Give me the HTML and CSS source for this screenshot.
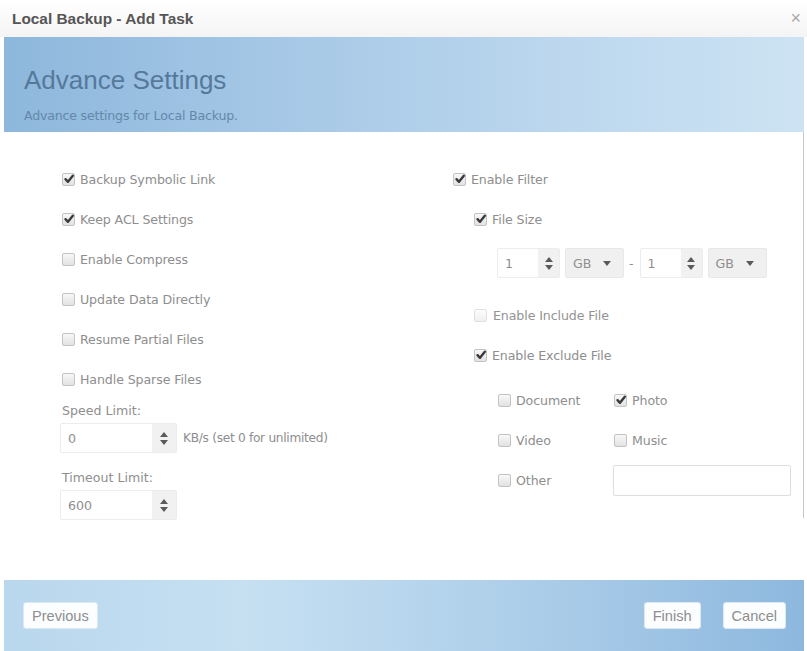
FILE: index.html
```html
<!DOCTYPE html>
<html>
<head>
<meta charset="utf-8">
<title>Local Backup - Add Task</title>
<link rel="stylesheet" href="styles.css">
</head>
<body>
<div class="dialog">
  <div class="titlebar">
    <span class="title">Local Backup - Add Task</span>
    <span class="close">×</span>
  </div>
  <div class="banner">
    <div class="banner-title">Advance Settings</div>
    <div class="banner-sub">Advance settings for Local Backup.</div>
  </div>
  <div class="content">
    <div class="col-left">
      <label class="row"><span class="cb checked"><svg viewBox="0 0 12 12"><path d="M2.5 6.2 L5 8.8 L9.8 2.8" /></svg></span>Backup Symbolic Link</label>
      <label class="row"><span class="cb checked"><svg viewBox="0 0 12 12"><path d="M2.5 6.2 L5 8.8 L9.8 2.8" /></svg></span>Keep ACL Settings</label>
      <label class="row"><span class="cb"></span>Enable Compress</label>
      <label class="row"><span class="cb"></span>Update Data Directly</label>
      <label class="row"><span class="cb"></span>Resume Partial Files</label>
      <label class="row"><span class="cb"></span>Handle Sparse Files</label>
      <div class="field-label">Speed Limit:</div>
      <div class="field">
        <div class="spin spin-wide"><span class="spin-val">0</span><span class="spin-btn"><i class="up"></i><i class="down"></i></span></div>
        <span class="hint">KB/s (set 0 for unlimited)</span>
      </div>
      <div class="field-label second">Timeout Limit:</div>
      <div class="field">
        <div class="spin spin-wide"><span class="spin-val">600</span><span class="spin-btn"><i class="up"></i><i class="down"></i></span></div>
      </div>
    </div>
    <div class="col-right">
      <label class="row"><span class="cb checked"><svg viewBox="0 0 12 12"><path d="M2.5 6.2 L5 8.8 L9.8 2.8" /></svg></span>Enable Filter</label>
      <div class="indent1">
        <label class="row"><span class="cb checked"><svg viewBox="0 0 12 12"><path d="M2.5 6.2 L5 8.8 L9.8 2.8" /></svg></span>File Size</label>
        <div class="size-row">
          <div class="spin spin-small"><span class="spin-val">1</span><span class="spin-btn"><i class="up"></i><i class="down"></i></span></div>
          <div class="select">GB<i class="caret"></i></div>
          <span class="dash">-</span>
          <div class="spin spin-small"><span class="spin-val">1</span><span class="spin-btn"><i class="up"></i><i class="down"></i></span></div>
          <div class="select">GB<i class="caret"></i></div>
        </div>
        <label class="row include"><span class="cb disabled"></span>Enable Include File</label>
        <label class="row"><span class="cb checked"><svg viewBox="0 0 12 12"><path d="M2.5 6.2 L5 8.8 L9.8 2.8" /></svg></span>Enable Exclude File</label>
        <div class="types">
          <label class="row"><span class="cb"></span>Document</label>
          <label class="row"><span class="cb checked"><svg viewBox="0 0 12 12"><path d="M2.5 6.2 L5 8.8 L9.8 2.8" /></svg></span>Photo</label>
          <label class="row"><span class="cb"></span>Video</label>
          <label class="row"><span class="cb"></span>Music</label>
          <label class="row"><span class="cb"></span>Other</label>
          <div class="other-cell"><div class="text-input"></div></div>
        </div>
      </div>
    </div>
  </div>
  <div class="gap"></div>
  <div class="footer">
    <button class="btn">Previous</button>
    <div class="footer-right">
      <button class="btn">Finish</button>
      <button class="btn">Cancel</button>
    </div>
  </div>
</div>
</body>
</html>
```
FILE: styles.css
```css
* { box-sizing: border-box; }
html, body { margin: 0; padding: 0; background: #ffffff; }
body { width: 807px; height: 651px; overflow: hidden; font-family: "DejaVu Sans", Verdana, sans-serif; }

.dialog { width: 807px; height: 651px; display: flex; flex-direction: column; background: #fff; }

.titlebar {
  height: 37px;
  display: flex;
  align-items: center;
  justify-content: space-between;
  padding: 0 6px 0 12px;
  background: linear-gradient(#ffffff, #f4f4f4);
}
.title { font-family: "Liberation Sans", Arial, sans-serif; font-weight: bold; font-size: 15.4px; color: #555; }
.close { font-family: "Liberation Sans", Arial, sans-serif; font-size: 18px; color: #a8a8a8; }

.banner {
  height: 95px;
  margin: 0 3px 0 4px;
  padding: 28px 0 0 20px;
  background: linear-gradient(90deg, #8db7dc 0%, #a6c8e6 35%, #bcd7ee 70%, #cde3f3 100%);
}
.banner-title { font-family: "Liberation Sans", Arial, sans-serif; font-size: 26px; color: #55799b; line-height: 30px; }
.banner-sub { font-size: 12.6px; color: #6388aa; margin-top: 13px; letter-spacing: -0.2px; }

.content {
  height: 386px;
  width: 804px;
  border-right: 1px solid #c9c9c9;
  display: grid;
  grid-template-columns: 453px 1fr;
  padding-top: 27px;
}

.row {
  height: 40px;
  display: flex;
  align-items: center;
  font-size: 12.6px;
  color: #8e8e8e;
  letter-spacing: -0.1px;
}
.cb {
  width: 13px;
  height: 13px;
  border: 1px solid #c3c3c3;
  border-radius: 2px;
  background: linear-gradient(#f8f8f8, #e2e2e2);
  margin-right: 5px;
  position: relative;
  flex: none;
}
.cb svg { position: absolute; left: 0; top: -1px; width: 12px; height: 12px; }
.cb svg path { fill: none; stroke: #3a3a3a; stroke-width: 2.4; stroke-linecap: round; stroke-linejoin: round; }
.cb.disabled { border-color: #e0e0e0; background: linear-gradient(#fcfcfc, #f0f0f0); }

.col-left { padding-left: 62px; }
.field-label { font-size: 12.6px; color: #8e8e8e; height: 14px; line-height: 14px; margin-top: 5px; }
.field-label.second { margin-top: 18px; }
.field { display: flex; align-items: center; margin-top: 5px; }
.hint { font-size: 12.2px; color: #8e8e8e; margin-left: 6px; letter-spacing: -0.3px; }

.spin {
  display: flex;
  height: 30px;
  border: 1px solid #ececec;
  border-radius: 2px;
  background: #fff;
}
.spin-wide { width: 117px; margin-left: -2px; }
.spin-small { width: 63px; }
.spin-val { flex: 1; display: flex; align-items: center; padding-left: 7px; font-size: 12.6px; color: #8e8e8e; }
.spin-btn {
  width: 24px;
  background: #f1f1f1;
  display: flex;
  flex-direction: column;
  align-items: center;
  justify-content: center;
  gap: 3px;
}
.spin-small .spin-btn { width: 21px; }
.up { width: 0; height: 0; border-left: 4px solid transparent; border-right: 4px solid transparent; border-bottom: 5px solid #5a5a5a; }
.down { width: 0; height: 0; border-left: 4px solid transparent; border-right: 4px solid transparent; border-top: 5px solid #5a5a5a; }

.col-right { padding-left: 0; }
.indent1 { padding-left: 21px; }
.size-row { display: flex; align-items: center; margin: 9px 0 17px 23px; height: 30px; }
.select {
  width: 59px;
  height: 30px;
  margin-left: 5px;
  background: #f0f0f0;
  border: 1px solid #e8e8e8;
  border-radius: 2px;
  display: flex;
  align-items: center;
  padding-left: 7px;
  font-size: 12.6px;
  color: #8e8e8e;
}
.caret { width: 0; height: 0; margin-left: 12px; border-left: 4px solid transparent; border-right: 4px solid transparent; border-top: 5px solid #5a5a5a; }
.dash { font-size: 12.6px; color: #8e8e8e; margin: 0 6px 0 5px; }
.include { color: #939393; }
.include .cb { margin-right: 6px; }

.types {
  display: grid;
  grid-template-columns: 116px 180px;
  margin-left: 24px;
  margin-top: 5px;
}
.other-cell { display: flex; align-items: center; }
.text-input { width: 178px; height: 31px; margin-left: -1px; border: 1px solid #dedede; border-radius: 2px; background: #fff; }

.gap { flex: 1; }

.footer {
  height: 71px;
  margin: 0 3px 0 4px;
  display: flex;
  align-items: center;
  justify-content: space-between;
  padding: 0 18px 0 19px;
  background: linear-gradient(90deg, #b9d7ed 0%, #c6e0f2 30%, #a9cbe8 70%, #8db8de 100%);
}
.footer-right { display: flex; gap: 22px; }
.btn {
  height: 27px;
  padding: 0 8px;
  border: 1px solid #dce8f2;
  border-radius: 3px;
  background: #fbfdff;
  font-family: "Liberation Sans", Arial, sans-serif;
  font-size: 14.6px;
  color: #8e8e8e;
}
```
